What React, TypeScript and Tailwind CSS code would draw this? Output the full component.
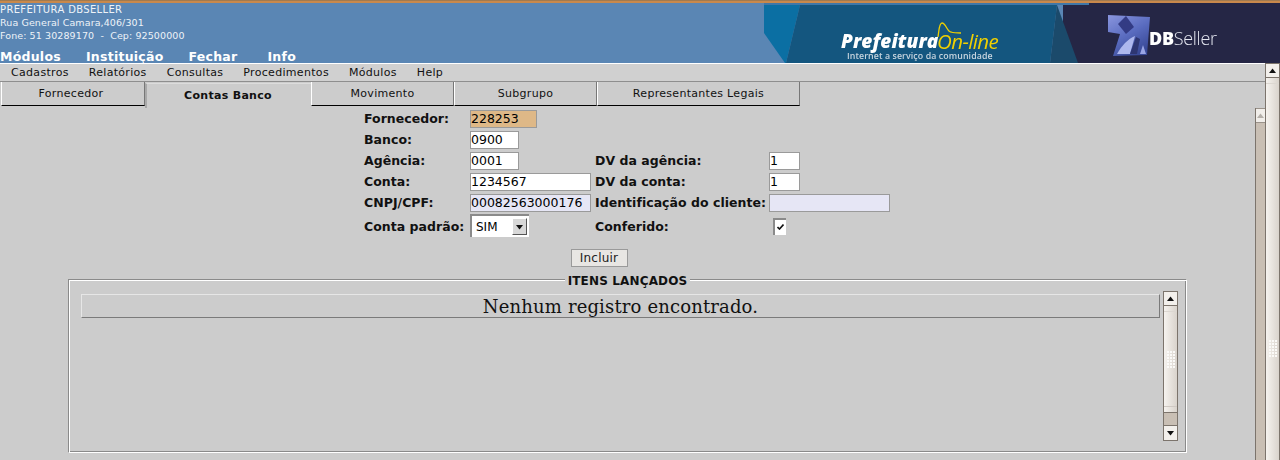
const menu = ["Cadastros", "Relatórios", "Consultas", "Procedimentos", "Módulos", "Help"];
const topLinks = ["Módulos", "Instituição", "Fechar"];

const tabs = [
  { label: "Fornecedor", width: "w-[144px]", extra: "pr-[4px]" },
  { label: "Contas Banco", width: "w-[166px]", active: true },
  { label: "Movimento", width: "w-[143px]" },
  { label: "Subgrupo", width: "w-[143px]" },
  { label: "Representantes Legais", width: "w-[203px]" },
];

const inputBase = "h-[18px] border border-[#9a9a9a] text-[12.5px] leading-[16px] text-black flex items-center";

function Label({ children, className = "pt-px" }: { children: string; className?: string }) {
  return <span className={`text-[12.5px] font-bold tracking-[0.03px] text-[#111] whitespace-nowrap ${className}`}>{children}</span>;
}

function Field({ value, className }: { value?: string; className: string }) {
  return <div className={`${inputBase} ${className}`}>{value}</div>;
}

function Arrow({ up, dim }: { up?: boolean; dim?: boolean }) {
  return (
    <svg width="9" height="6" viewBox="0 0 9 6">
      <path d={up ? "M4.5 0.5 L8 5 H1 Z" : "M1 1 H8 L4.5 5.5 Z"} fill={dim ? "#b5b0aa" : "#111"} />
    </svg>
  );
}

function Grip() {
  return (
    <div className="grid grid-cols-3 gap-x-[2px] gap-y-[1px] w-[8px]">
      {Array.from({ length: 18 }).map((_, i) => (
        <span key={i} className="w-[2px] h-[2px] bg-[#fbfaf8]" />
      ))}
    </div>
  );
}

function ListScrollbar() {
  return (
    <div className="w-[15px] h-[150px] border border-[#7c746c] flex flex-col shrink-0">
      <div className="h-[14px] bg-[#f3f0ec] border-b border-[#7c746c] flex items-center justify-center">
        <Arrow up />
      </div>
      <div className="flex-1 bg-linear-to-r from-[#f6f3ef] to-[#d9d3cc] flex flex-col items-center justify-center relative">
        <div className="absolute top-[5px] left-0 right-0 h-px bg-[#dcd7d1]" />
        <div className="absolute bottom-[5px] left-0 right-0 h-px bg-[#cfc9c3]" />
        <Grip />
      </div>
      <div className="h-[13px] bg-[#c9bfb4] border-t border-[#7c746c]" />
      <div className="h-[15px] bg-[#f3f0ec] border-t border-[#7c746c] flex items-center justify-center">
        <Arrow />
      </div>
    </div>
  );
}

function Banner() {
  return (
    <div className="relative w-[516px] h-[60px] shrink-0 overflow-hidden">
      <svg className="absolute inset-0" width="516" height="60" viewBox="0 0 516 60">
        <defs>
          <linearGradient id="cube" x1="0" y1="0" x2="0.6" y2="1">
            <stop offset="0" stopColor="#8a96de" />
            <stop offset="0.55" stopColor="#5a6cc0" />
            <stop offset="1" stopColor="#3a4a98" />
          </linearGradient>
        </defs>
        <rect x="0" y="0" width="325" height="2" fill="#3f77a8" />
        <rect x="325" y="0" width="191" height="60" fill="#252645" />
        <rect x="299" y="2" width="30" height="58" fill="#252645" />
        <path d="M0 2 H36 L22 60 L21 60 L0 30 Z" fill="#0b6fa3" />
        <path d="M36 2 H293 L286 60 H22 Z" fill="#14567f" />
        <path d="M293 2 L314 60 H286 Z" fill="#1b4a6b" />
        {/* DBSeller cube */}
        <g className="blur-[0.6px]">
          <path d="M344 12 L386 14 L383 52 L349 53 L356 31 L344 29 Z" fill="url(#cube)" />
          <path d="M354 21 L362 13 L370 24 L362 31 Z" fill="#333b84" />
          <path d="M353 51 C358 42 364 36 371 33 L366 51 Z" fill="#aeb8ee" />
          <path d="M366 51 L372 34 L376 36 L373 51 Z" fill="#2e3672" />
          <path d="M376 51 L379 42 L382 51 Z" fill="#9aa5e4" />
        </g>
        {/* On-line swoosh */}
        <path d="M174 34 C175 28 175 20 178 20 C182 20 183 29 187 29 C190 30 193 30 197 30" fill="none" stroke="#f0d000" strokeWidth="1.3" />
      </svg>
      <span className="absolute left-[77px] top-[29px] font-['Open_Sans',sans-serif] italic font-extrabold text-[19px] leading-[18px] tracking-[0.1px] text-white blur-[0.3px]">
        Prefeitura
      </span>
      <span className="absolute left-[173px] top-[28px] font-['Open_Sans',sans-serif] italic font-normal text-[20.5px] leading-[20px] tracking-[-0.6px] text-[#f0d000] blur-[0.2px]">
        On-line
      </span>
      <span className="absolute left-[83px] top-[48px] font-['Open_Sans',sans-serif] font-semibold text-[8.8px] leading-[11px] tracking-[0.1px] text-[#c8d5df] whitespace-nowrap blur-[0.3px]">
        Internet a serviço da comunidade
      </span>
      <span className="absolute left-[385px] top-[24px] font-['Open_Sans',sans-serif] font-light text-[18px] leading-[22px] tracking-[-0.3px] text-[#e4e6f0] blur-[0.3px]">
        <b className="font-extrabold text-white">DB</b>Seller
      </span>
    </div>
  );
}

export default function App() {
  return (
    <div className="w-[1280px] h-[460px] overflow-hidden bg-[#cccccc] font-['DejaVu_Sans',sans-serif] flex flex-col">
      <div className="h-[3px] bg-[#c9894c] border-t border-[#a07a50] shrink-0" />

      {/* header */}
      <header className="h-[60px] bg-[#5a86b4] flex justify-between shrink-0 text-white">
        <div className="flex flex-col">
          <div className="text-[9.5px] leading-[13px] tracking-[0.1px] text-[#eef3f8]">
            <p className="text-[10px] tracking-[0.35px]">PREFEITURA DBSELLER</p>
            <p>Rua General Camara,406/301</p>
            <p className="whitespace-pre">Fone: 51 30289170  -  Cep: 92500000</p>
          </div>
          <nav className="flex gap-[25px] mt-[7px] text-[12.5px] font-bold leading-[16px] tracking-[0.25px]">
            {topLinks.map((l) => (
              <span key={l}>{l}</span>
            ))}
            <span className="ml-[5px]">Info</span>
          </nav>
        </div>
        <Banner />
      </header>

      <div className="flex-1 flex min-h-0">
        <div className="flex-1 min-w-0 flex flex-col">
          {/* menu bar */}
          <div className="h-[19px] bg-[#d0d0d0] border-t border-white border-b border-b-[#8e8e8e] flex gap-[20px] pl-[11px] pt-[2px] items-center text-[11px] tracking-[0.31px] text-[#111] shrink-0">
            {menu.map((m) => (
              <span key={m}>{m}</span>
            ))}
          </div>

          {/* tabs */}
          <div className="h-[25px] flex pl-px shrink-0 text-[11px] tracking-[0.3px] text-[#111]">
            {tabs.map((t) =>
              t.active ? (
                <div key={t.label} className={`${t.width} h-[25px] mt-px border-l-[2px] border-l-[#a9a9a9] border-t border-t-[#dcdcdc] flex items-center justify-center pt-[1px] pr-[2px] font-bold text-[#111]`}>
                  {t.label}
                </div>
              ) : (
                <div key={t.label} className={`${t.width} ${t.extra ?? ""} h-[24px] pt-[1px] border-l border-l-white border-r border-r-[#777] border-b border-b-black flex items-center justify-center`}>
                  {t.label}
                </div>
              )
            )}
          </div>

          <div className="flex-1 flex min-h-0">
            <main className="flex-1 min-w-0 flex flex-col">
              {/* form */}
              <div className="pt-px pl-[364px] grid grid-cols-[106px_125px_174px_auto] auto-rows-[21px] items-center">
                <Label>Fornecedor:</Label>
                <Field value="228253" className="w-[67px] bg-[#deb887]" />
                <span /><span />

                <Label>Banco:</Label>
                <Field value="0900" className="w-[49px] bg-white" />
                <span /><span />

                <Label>Agência:</Label>
                <Field value="0001" className="w-[49px] bg-white" />
                <Label>DV da agência:</Label>
                <Field value="1" className="w-[31px] bg-white" />

                <Label>Conta:</Label>
                <Field value="1234567" className="w-[121px] bg-white" />
                <Label>DV da conta:</Label>
                <Field value="1" className="w-[31px] bg-white" />

                <Label>CNPJ/CPF:</Label>
                <Field value="00082563000176" className="w-[121px] bg-[#e6e6f5]" />
                <Label>Identificação do cliente:</Label>
                <Field className="w-[121px] bg-[#e6e6f5]" />

                <Label className="mt-[8px]">Conta padrão:</Label>
                <div className="mt-[4px] w-[59px] h-[23px] bg-white border-l-2 border-t-2 border-[#8a8a8a] flex items-center pl-[4px] text-[12px]">
                  <span className="flex-1">SIM</span>
                  <div className="w-[15px] h-[17px] mr-[2px] bg-[#d8d8d8] border-r border-b border-[#555] border-l border-l-white border-t border-t-white flex items-center justify-center">
                    <Arrow />
                  </div>
                </div>
                <Label className="mt-[8px]">Conferido:</Label>
                <div className="mt-[5px] ml-[4px] w-[13px] h-[17px] bg-white border-l-2 border-t-2 border-[#8a8a8a] flex items-center justify-center">
                  <svg width="7" height="6" viewBox="0 0 7 6">
                    <path d="M0.5 3 L2.5 5 L6.5 0.5" fill="none" stroke="#111" strokeWidth="1.6" />
                  </svg>
                </div>
              </div>

              <div className="flex justify-center mt-[15px] pr-[57px]">
                <button className="w-[57px] h-[18px] bg-[#e8e6e3] border border-[#9a9a9a] text-[12px] leading-[14px] tracking-[0.2px] text-[#222]">
                  Incluir
                </button>
              </div>

              {/* items */}
              <fieldset className="mx-[68px] mt-[4px] h-[182px] border border-t-[#8a8a8a] border-l-[#8a8a8a] border-r-white border-b-white shadow-[inset_1px_1px_0_#fff,inset_-1px_-1px_0_#8a8a8a] px-[12px] min-w-0">
                <legend className="mx-auto px-[3px] pt-[3px] bg-[#cccccc] text-[12px] font-bold leading-[14px] tracking-[0.15px] text-[#111]">
                  ITENS LANÇADOS
                </legend>
                <div className="flex gap-[3px] items-start pt-[5px]">
                  <div className="flex-1 h-[24px] mt-[1px] border-l border-t border-[#e6e6e6] border-r border-r-[#7a7a7a] border-b border-b-[#7a7a7a] flex items-center justify-center font-['DejaVu_Serif',serif] text-[18px] tracking-[0.15px] text-[#111]">
                    Nenhum registro encontrado.
                  </div>
                  <div className="-mt-[2px] mr-[-4px]">
                    <ListScrollbar />
                  </div>
                </div>
              </fieldset>
            </main>

            {/* inner page scrollbar */}
            <div className="w-[10px] flex flex-col shrink-0 border-l border-[#7c746c] mt-px">
              <div className="h-[15px] bg-[#f1eeea] border-t border-b border-[#9a928a] flex items-center justify-center">
                <Arrow up dim />
              </div>
              <div className="flex-1 bg-[#c9bfb4]" />
            </div>
          </div>
        </div>

        {/* outer page scrollbar */}
        <div className="w-[15px] shrink-0 border-l border-r border-[#7c746c] flex flex-col">
          <div className="h-[15px] bg-[#f3f0ec] border-t border-b border-[#7c746c] flex items-center justify-center">
            <Arrow up />
          </div>
          <div className="flex-1 bg-linear-to-r from-[#f6f3ef] to-[#d9d3cc] flex flex-col items-center pt-[262px] relative">
            <div className="absolute top-[5px] left-0 right-0 h-px bg-[#dcd7d1]" />
            <Grip />
          </div>
        </div>
      </div>
    </div>
  );
}
